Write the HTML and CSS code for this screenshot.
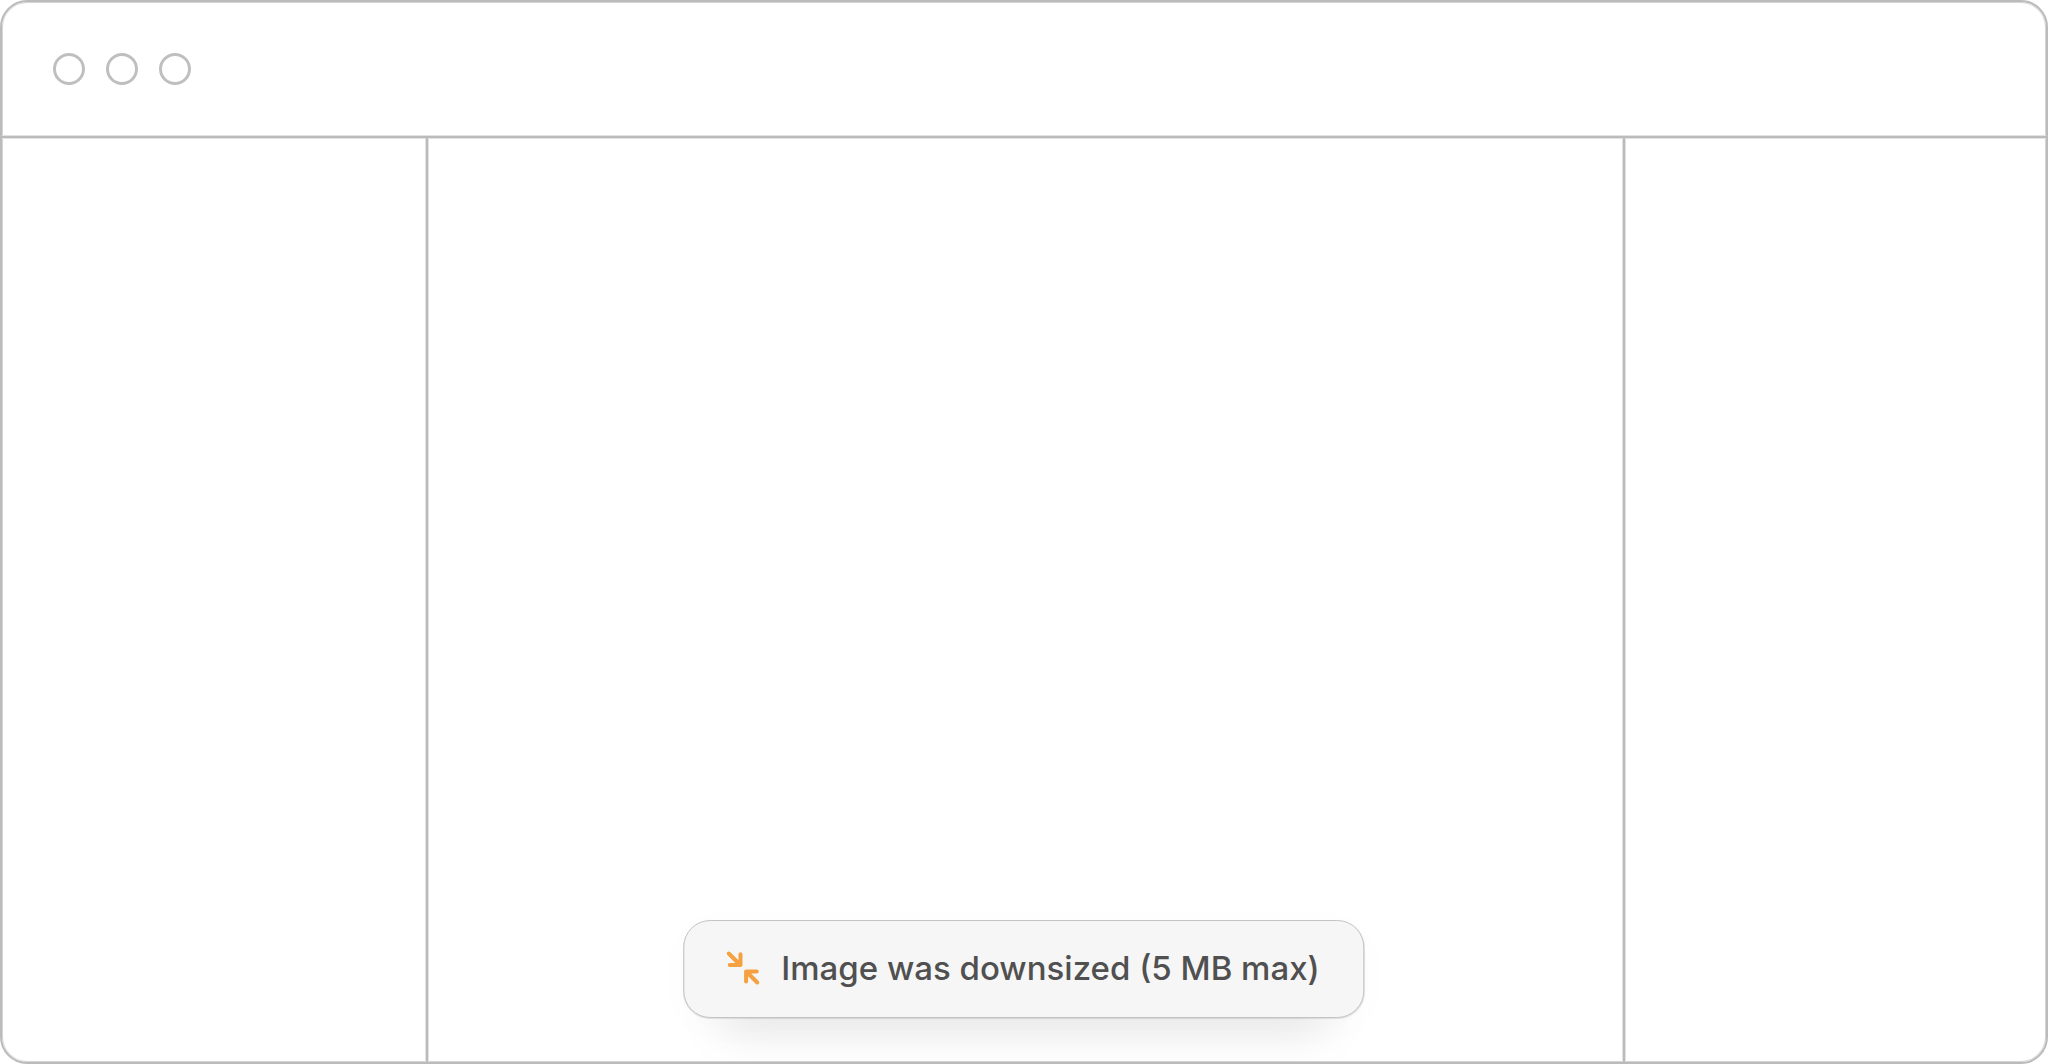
FILE: index.html
```html
<!DOCTYPE html>
<html lang="en">
<head>
    <meta charset="UTF-8">
    <meta name="viewport" content="width=device-width, initial-scale=1.0">
    <title>Image was downsized</title>
    <link rel="stylesheet" href="styles.css">
</head>
<body>
    <div class="window">
        <header class="titlebar">
            <span class="dot"></span>
            <span class="dot"></span>
            <span class="dot"></span>
        </header>

        <div class="panes">
            <aside class="pane pane-left"></aside>
            <main class="pane"></main>
            <aside class="pane pane-right"></aside>
        </div>

        <!-- Toast -->
        <div class="toast" role="status">
            <svg class="toast-icon" viewBox="0 0 36 36" aria-hidden="true">
                <path d="M3.5 3.5L14.5 14.5M4.5 15H15.2V4.2"/>
                <path d="M32 32.5L21.5 22M20.8 31.5V21.5H31.5"/>
            </svg>
            <span>Image was downsized (5 MB max)</span>
        </div>
    </div>
</body>
</html>
```

FILE: styles.css
```css
* {
    margin: 0;
    padding: 0;
    box-sizing: border-box;
}

body {
    background-color: #fff;
    color: #505050;
    font-family: Inter, "Liberation Sans", sans-serif;
}

.window {
    position: relative;
    display: flex;
    flex-direction: column;
    min-height: 100vh;
    border: 2px solid #bbb;
    border-radius: 27px;
    box-shadow: inset 0 0 0 1px #d4d4d4;
    overflow: hidden;
}

/* Title bar */
.titlebar {
    display: flex;
    gap: 21px;
    padding: 51px;
    border-bottom: 2px solid #bbb;
    box-shadow: 0 1px #e2e2e2, inset 0 -1px #e2e2e2;
}

.dot {
    width: 32px;
    height: 32px;
    border: 3px solid #bfbfbf;
    border-radius: 50%;
}

/* Panes */
.panes {
    flex: 1;
    display: grid;
    grid-template-columns: 426px 1fr 423px;
}

.pane-left {
    border-right: 2px solid #bbb;
    box-shadow: 1px 0 #e2e2e2, inset -1px 0 #e2e2e2;
}

.pane-right {
    border-left: 2px solid #bbb;
    box-shadow: -1px 0 #e2e2e2, inset 1px 0 #e2e2e2;
}

/* Toast */
.toast {
    position: absolute;
    left: 50%;
    bottom: 44px;
    transform: translateX(-50%);
    display: flex;
    align-items: center;
    gap: 20px;
    padding: 27px 44px 29px 41px;
    background-color: #f6f6f6;
    border: 1px solid #c4c4c4;
    border-radius: 27px;
    box-shadow: 0 1px 1px rgba(0, 0, 0, 0.1), 0 44px 48px -40px rgba(0, 0, 0, 0.22), 0 8px 40px rgba(0, 0, 0, 0.02);
    font-size: 33px;
    font-weight: 500;
    line-height: 40px;
    white-space: nowrap;
}

.toast-icon {
    width: 36px;
    height: 36px;
    fill: none;
    stroke: #f5a142;
    stroke-width: 4;
    stroke-linecap: round;
    stroke-linejoin: round;
}
```
